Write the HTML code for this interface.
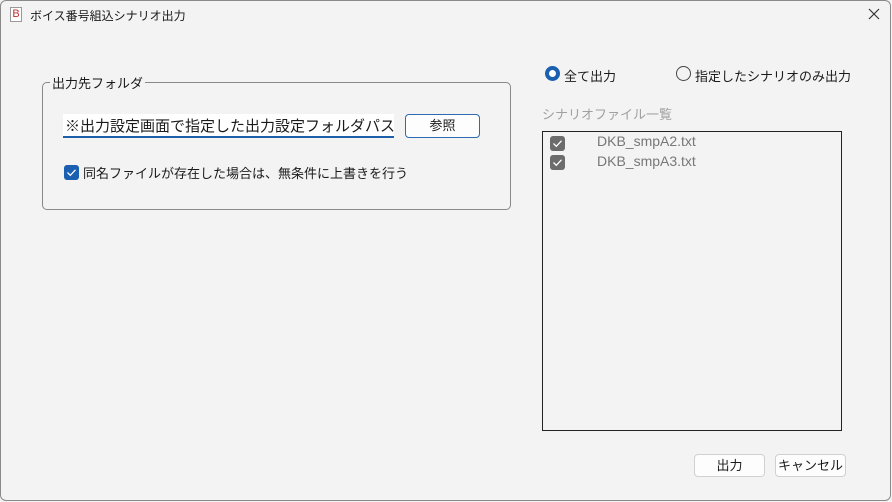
<!DOCTYPE html><html><head><meta charset="utf-8"><style>
body{margin:0;width:892px;height:502px;background:#f3f3f3;font-family:"Liberation Sans","Noto Sans CJK JP",sans-serif;color:#1a1a1a;position:relative;overflow:hidden}
.a{position:absolute;white-space:nowrap}
.btn{position:absolute;background:#fdfdfd;border:1px solid #d0d0d0;border-radius:4px;text-align:center;font-size:13px;box-sizing:border-box;white-space:nowrap}
.cb{position:absolute;width:15px;height:15px;border-radius:3px}
</style></head><body>
<div class="a" style="left:0;top:0;width:891px;height:501px;border:1px solid #8a8a8a;border-radius:6px;box-sizing:border-box"></div>
<div class="a" style="left:10px;top:7px;width:12px;height:15px;border:1px solid #999;background:#fff;box-sizing:border-box;font-size:11px;line-height:13px;text-align:center;color:#c03030">B</div>
<div class="a" style="left:30px;top:7px;font-size:12px">ボイス番号組込シナリオ出力</div>
<svg class="a" style="left:868px;top:8px" width="12" height="12" viewBox="0 0 12 12"><path d="M1 1L11 11M11 1L1 11" stroke="#333" stroke-width="1.2"/></svg>
<div class="a" style="left:42px;top:82px;width:469px;height:128px;border:1px solid #888;border-radius:5px;box-sizing:border-box"></div>
<div class="a" style="left:50px;top:73px;font-size:13px;background:#f3f3f3;padding:0 2px">出力先フォルダ</div>
<div class="a" style="left:63px;top:114px;width:331px;height:24px;background:#fff;border-bottom:2px solid #1d5fa8;box-sizing:border-box;font-size:15px;padding:1px 2px">※出力設定画面で指定した出力設定フォルダパス</div>
<div class="btn" style="left:405px;top:114px;width:75px;height:24px;border-color:#2c6bb2;line-height:22px">参照</div>
<svg class="cb" style="left:64px;top:165px;background:#1a5fb0" viewBox="0 0 15 15"><path d="M3.5 7.5L6.3 10.3L11.5 4.8" stroke="#fff" stroke-width="1.3" fill="none"/></svg>
<div class="a" style="left:83px;top:163px;font-size:13px">同名ファイルが存在した場合は、無条件に上書きを行う</div>
<div class="a" style="left:545px;top:66px;width:15px;height:15px;border:4px solid #1a5fb0;border-radius:50%;box-sizing:border-box;background:#fff"></div>
<div class="a" style="left:564px;top:66px;font-size:13px">全て出力</div>
<div class="a" style="left:676px;top:66px;width:15px;height:15px;border:1px solid #444;border-radius:50%;box-sizing:border-box"></div>
<div class="a" style="left:695px;top:66px;font-size:13px">指定したシナリオのみ出力</div>
<div class="a" style="left:542px;top:104px;font-size:13px;color:#a0a0a0">シナリオファイル一覧</div>
<div class="a" style="left:542px;top:131px;width:300px;height:300px;border:1px solid #222;box-sizing:border-box"></div>
<svg class="cb" style="left:550px;top:136px;background:#6c6c6c" viewBox="0 0 15 15"><path d="M3.5 7.5L6.3 10.3L11.5 4.8" stroke="#fff" stroke-width="1.3" fill="none"/></svg>
<div class="a" style="left:597px;top:133px;font-size:14px;color:#777">DKB_smpA2.txt</div>
<svg class="cb" style="left:550px;top:155px;background:#6c6c6c" viewBox="0 0 15 15"><path d="M3.5 7.5L6.3 10.3L11.5 4.8" stroke="#fff" stroke-width="1.3" fill="none"/></svg>
<div class="a" style="left:597px;top:153px;font-size:14px;color:#777">DKB_smpA3.txt</div>
<div class="btn" style="left:694px;top:454px;width:71px;height:23px;line-height:21px">出力</div>
<div class="btn" style="left:775px;top:454px;width:71px;height:23px;line-height:21px">キャンセル</div>
</body></html>
